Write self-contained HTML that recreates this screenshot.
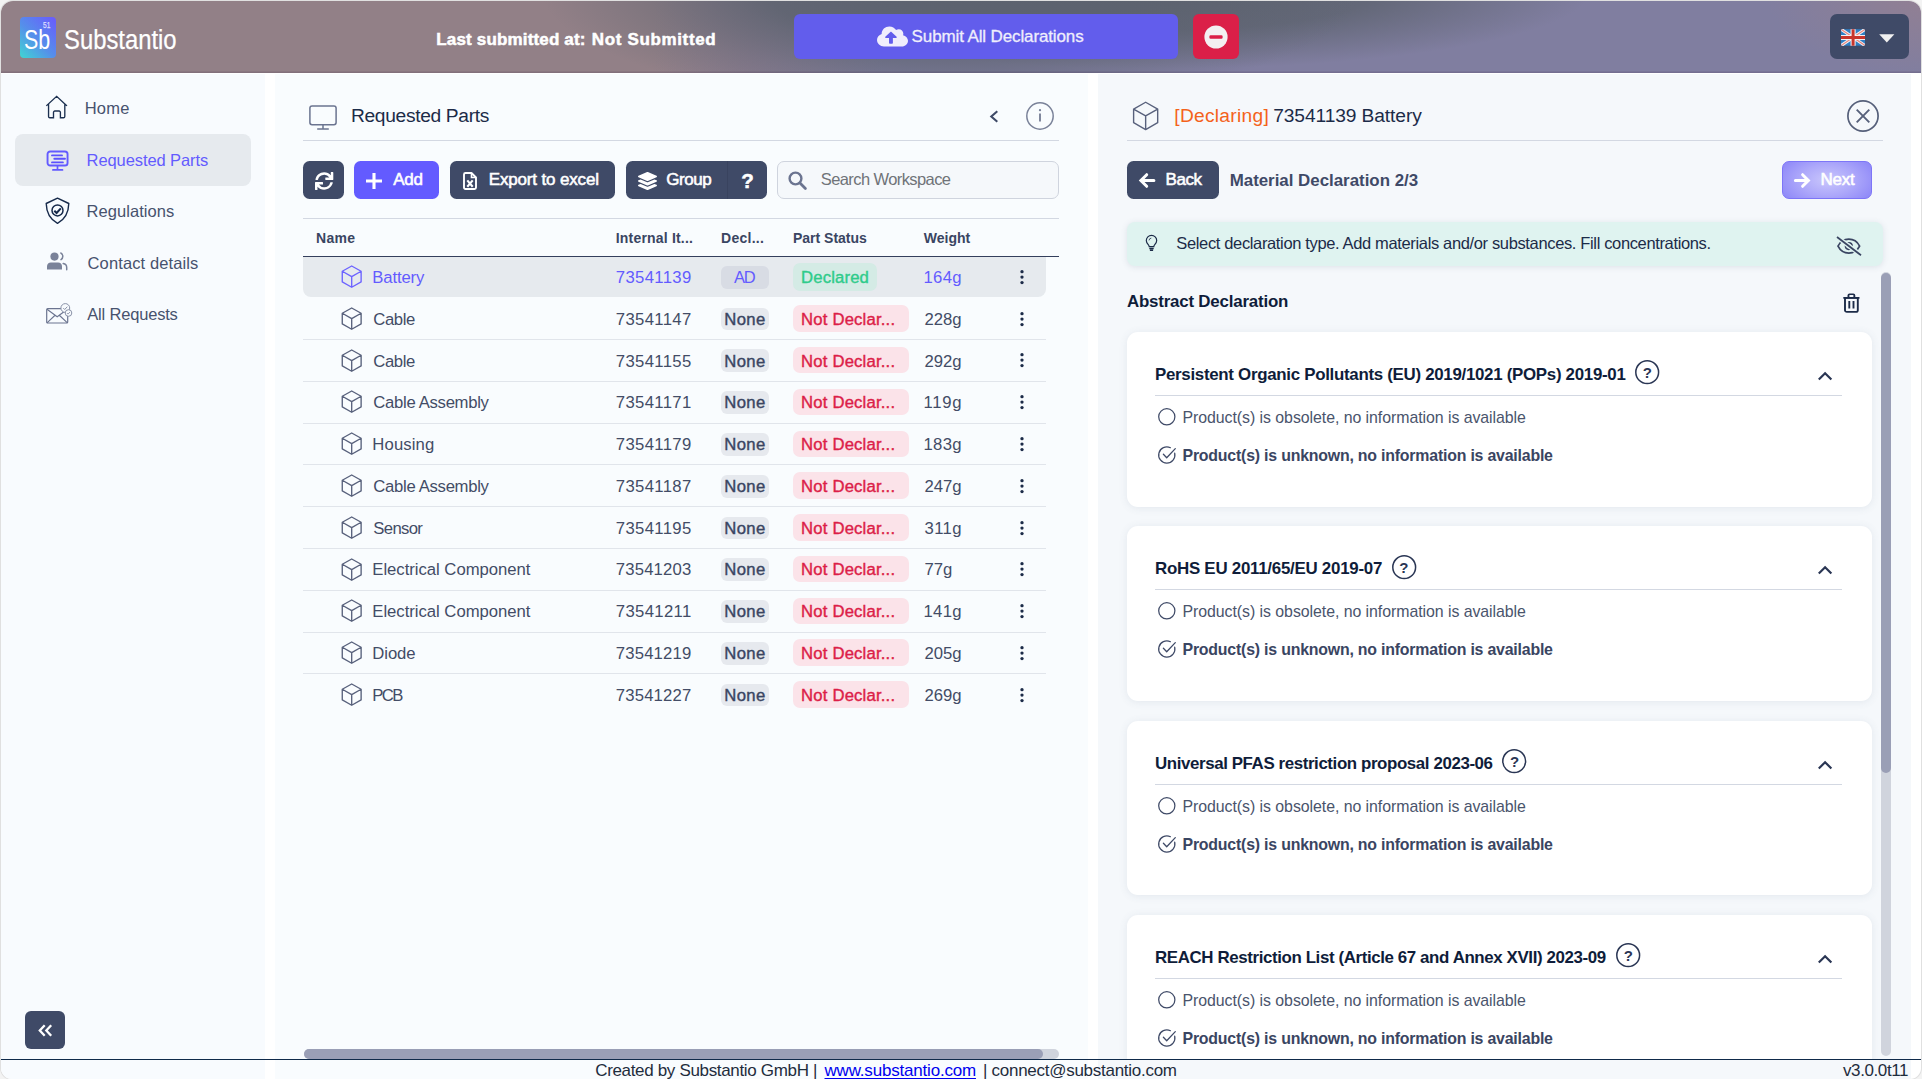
<!DOCTYPE html>
<html lang="en"><head><meta charset="utf-8"><title>Substantio</title>
<style>
html,body{margin:0;padding:0;}
body{width:1922px;height:1079px;overflow:hidden;background:#fff;font-family:"Liberation Sans",sans-serif;position:relative;}
div,svg{box-sizing:border-box;}
svg{overflow:visible;}
</style></head><body>
<div style="position:absolute;left:0;top:0;width:1922px;height:1079px;background:#f3f3f3;"></div>
<div style="position:absolute;left:1px;top:1px;width:1920px;height:1078px;background:#fff;border-radius:12px 12px 11px 11px;box-shadow:0 0 0 1px #e0e0e0;"></div>
<div style="position:absolute;left:1px;top:1px;width:1920px;height:72px;border-radius:12px 12px 0 0;overflow:hidden;background:radial-gradient(ellipse 170px 85px at 1935px -8px, rgba(152,128,142,0.8), rgba(152,128,142,0) 100%),radial-gradient(ellipse 410px 118px at 950px -12px, rgba(92,98,110,0.95) 0%, rgba(92,98,110,0.85) 45%, rgba(92,98,110,0.35) 75%, rgba(92,98,110,0) 100%),radial-gradient(ellipse 430px 78px at 1160px -10px, rgba(92,98,110,0.95) 0%, rgba(92,98,110,0.8) 50%, rgba(92,98,110,0) 100%),linear-gradient(90deg, #928087 0%, #928087 34%, #8a7c8f 39%, #807ea0 46%, #807ea0 100%);box-shadow:inset 0 -1.5px 0 rgba(60,40,70,0.18);"></div>
<div style="position:absolute;left:20px;top:17px;width:36px;height:41px;border-radius:4px;background:linear-gradient(45deg,#3fd6d2 0%,#5590ea 45%,#6a59ff 100%);"></div>
<div style="position:absolute;top:24.50px;font-size:28px;line-height:30px;color:#fff;white-space:nowrap;left:24.33px;"><span style="display:inline-block;transform:scaleX(0.7651);transform-origin:0 0;">Sb</span></div>
<div style="position:absolute;top:20.00px;font-size:8.8px;line-height:10px;color:#dcdcff;white-space:nowrap;left:43.40px;-webkit-text-stroke:0.25px #dcdcff;"><span style="display:inline-block;transform:scaleX(0.7480);transform-origin:0 0;">51</span></div>
<div style="position:absolute;top:23.50px;font-size:27.5px;line-height:32px;color:#fff;white-space:nowrap;left:64.13px;-webkit-text-stroke:0.25px #fff;"><span style="display:inline-block;transform:scaleX(0.8666);transform-origin:0 0;">Substantio</span></div>
<div style="position:absolute;top:27.50px;font-size:17px;line-height:24px;color:#fff;white-space:nowrap;left:436.30px;font-weight:700;letter-spacing:0.162px;-webkit-text-stroke:0.5px #fff;">Last submitted at:</div>
<div style="position:absolute;top:27.50px;font-size:17px;line-height:24px;color:#fff;white-space:nowrap;left:591.80px;font-weight:700;letter-spacing:0.644px;-webkit-text-stroke:0.5px #fff;">Not Submitted</div>
<div style="position:absolute;left:794px;top:14px;width:383.5px;height:44.5px;background:#625dec;border-radius:6px;"></div>
<svg style="position:absolute;left:877px;top:24.5px;" width="31" height="23" viewBox="0 0 640 512" preserveAspectRatio="none"><path fill="#f0eefc" d="M537.6 226.6c4.100-10.700 6.400-22.400 6.400-34.600 0-53-43-96-96-96-19.700 0-38.100 6-53.300 16.200C367 64.200 315.300 32 256 32c-88.400 0-160 71.600-160 160 0 2.700.1 5.400.2 8.100C40.200 219.800 0 273.200 0 336c0 79.500 64.500 144 144 144h368c70.700 0 128-57.300 128-128 0-61.900-44-113.600-102.400-125.400zM393.400 288H328v112c0 8.800-7.200 16-16 16h-48c-8.800 0-16-7.200-16-16V288h-65.400c-14.300 0-21.400-17.200-11.300-27.300l105.400-105.400c6.200-6.200 16.400-6.200 22.600 0l105.400 105.400c10.100 10.100 2.900 27.300-11.300 27.300z"/></svg>
<div style="position:absolute;top:24.50px;font-size:17px;line-height:24px;color:#efeefc;white-space:nowrap;left:911.60px;letter-spacing:-0.124px;-webkit-text-stroke:0.3px #efeefc;">Submit All Declarations</div>
<div style="position:absolute;left:1192.5px;top:14px;width:46px;height:44.5px;background:#db1f48;border-radius:6px;"></div>
<svg style="position:absolute;left:1203.5px;top:24.5px;" width="24" height="24" viewBox="0 0 24 24" preserveAspectRatio="none"><circle cx="12" cy="12" r="11.6" fill="#f3f0f2"/><rect x="5.4" y="10.2" width="13.2" height="3.6" rx="1.2" fill="#db1f48"/></svg>
<div style="position:absolute;left:1830px;top:14px;width:79.1px;height:44.8px;background:#3f4a67;border-radius:7px;"></div>
<div style="position:absolute;left:1841px;top:28.7px;width:24.2px;height:16.9px;border-radius:2px;overflow:hidden;"><svg style="position:absolute;left:0px;top:0px;display:block;" width="24.2" height="16.9" viewBox="0 0 50 34" x="none"><rect width="50" height="34" fill="#2f7fc4"/><path d="M0 0L50 34M50 0L0 34" stroke="#f4f0f2" stroke-width="6.500"/><path d="M0 0L50 34M50 0L0 34" stroke="#e8867e" stroke-width="2.400"/><path d="M25 0V34M0 17H50" stroke="#f4f0f2" stroke-width="10.500"/><path d="M25 0V34M0 17H50" stroke="#c8352c" stroke-width="6.200"/></svg>
</div>
<svg style="position:absolute;left:1878.7px;top:33.8px;" width="15.6" height="8.8" viewBox="0 0 15 9" preserveAspectRatio="none"><path d="M0.200 0.300h14.600L7.500 8.800z" fill="#f0f0f0"/></svg>
<div style="position:absolute;left:1px;top:74px;width:264px;height:1005px;background:#f8fbfe;border-radius:0 0 0 11px;"></div>
<div style="position:absolute;left:15px;top:134px;width:236px;height:52px;background:#e6eaee;border-radius:8px;"></div>
<svg style="position:absolute;left:46px;top:94.5px;" width="22" height="24" viewBox="0 0 22 24" preserveAspectRatio="none"><path d="M.800 10.400L10.650 1.300l9.850 9.100M2.550 9.400V21.400a1.300 1.300 0 0 0 1.300 1.300H7.500V17.300a1.300 1.300 0 0 1 1.300-1.300h4.300a1.300 1.300 0 0 1 1.300 1.300V22.700h3.100a1.300 1.300 0 0 0 1.300-1.300V9.400" fill="none" stroke="#1c3050" stroke-width="1.350" stroke-linejoin="miter" stroke-linecap="square"/></svg>
<div style="position:absolute;top:96.00px;font-size:16.5px;line-height:24px;color:#47526e;white-space:nowrap;left:84.70px;letter-spacing:0.254px;">Home</div>
<svg style="position:absolute;left:46px;top:149.5px;" width="23" height="22" viewBox="0 0 23 22" preserveAspectRatio="none"><rect x="1.550" y="1.450" width="20" height="14.100" rx="2.600" fill="none" stroke="#635bff" stroke-width="1.900"/><path d="M6 5.400h10M8.300 8.800H19M6 12.400h10.900" stroke="#5b52ff" stroke-width="1.900" stroke-linecap="round" fill="none"/><path d="M11.500 16v3.600M6.900 19.900h9.600" stroke="#635bff" stroke-width="1.700" stroke-linecap="round" fill="none"/></svg>
<div style="position:absolute;top:148.00px;font-size:16.5px;line-height:24px;color:#635bff;white-space:nowrap;left:86.60px;letter-spacing:-0.090px;">Requested Parts</div>
<svg style="position:absolute;left:45px;top:197px;" width="25" height="28" viewBox="0 0 25 28" preserveAspectRatio="none"><path d="M12.500 1.200L23.800 6.500c-.200 8.500-3 15.400-11.300 19.900C4.200 21.900 1.400 15 1.200 6.500z" fill="none" stroke="#16294a" stroke-width="1.400" stroke-linejoin="round"/><circle cx="12.500" cy="13.400" r="5.500" fill="none" stroke="#16294a" stroke-width="1.500"/><path d="M9.300 13.700l2.300 2.300 4.200-4.600" fill="none" stroke="#16294a" stroke-width="2" stroke-linecap="butt" stroke-linejoin="miter"/></svg>
<div style="position:absolute;top:199.00px;font-size:16.5px;line-height:24px;color:#47526e;white-space:nowrap;left:86.60px;letter-spacing:0.051px;">Regulations</div>
<svg style="position:absolute;left:46px;top:252px;" width="22" height="19" viewBox="0 0 22 19" preserveAspectRatio="none"><circle cx="8.500" cy="4.600" r="4.100" fill="#7a8299"/><path d="M1 17.500v-3.200c0-2.200 1.700-3.900 3.900-3.900h7.200c2.200 0 3.900 1.700 3.900 3.900v3.200z" fill="#7a8299"/><path d="M14.800 1c2.300 1 2.900 4.800.2 6.600M17.200 11.400c2.200.400 3.500 2 3.500 4v2.300" fill="none" stroke="#7a8299" stroke-width="1.500" stroke-linecap="round"/></svg>
<div style="position:absolute;top:251.00px;font-size:16.5px;line-height:24px;color:#47526e;white-space:nowrap;left:87.60px;letter-spacing:0.115px;">Contact details</div>
<svg style="position:absolute;left:45.5px;top:302.5px;" width="27" height="21" viewBox="0 0 27 21" preserveAspectRatio="none"><rect x=".700" y="5.700" width="21" height="14.300" rx="1" fill="none" stroke="#6b7490" stroke-width="1.200"/><path d="M1 6.200l10.200 7.600L21.400 6.200M1 19.800l7.800-7.300M21.400 19.800l-7.800-7.300" fill="none" stroke="#6b7490" stroke-width="1.100"/><circle cx="19.300" cy="5" r="4.400" fill="#f8fbfe" stroke="#8a92a8" stroke-width="1"/><path d="M17.300 5.100l1.400 1.400 2.600-2.800" fill="none" stroke="#8a92a8" stroke-width="1"/><circle cx="22.500" cy="10" r="3.300" fill="#f8fbfe" stroke="#8a92a8" stroke-width="1"/><path d="M21 10.100l1 1 2-2.100" fill="none" stroke="#8a92a8" stroke-width=".9"/></svg>
<div style="position:absolute;top:302.00px;font-size:16.5px;line-height:24px;color:#47526e;white-space:nowrap;left:87.30px;letter-spacing:-0.189px;">All Requests</div>
<div style="position:absolute;left:25px;top:1011px;width:40px;height:38px;background:#3f4a67;border-radius:6px;"></div>
<svg style="position:absolute;left:37.5px;top:1023.5px;" width="15" height="13" viewBox="0 0 15 13" preserveAspectRatio="none"><path d="M6.700 1.300L1.800 6.500l4.900 5.200M13.200 1.300L8.300 6.500l4.900 5.200" fill="none" stroke="#fff" stroke-width="2.300" stroke-linejoin="miter"/></svg>
<div style="position:absolute;left:275px;top:74px;width:813px;height:1005px;background:#f9fcfe;"></div>
<svg style="position:absolute;left:308.5px;top:104.5px;" width="28" height="25" viewBox="0 0 28 25" preserveAspectRatio="none"><rect x=".900" y=".900" width="26.200" height="18.800" rx="2.200" fill="none" stroke="#6b7490" stroke-width="1.500"/><path d="M14 19.700v4M8.200 24h11.600" stroke="#6b7490" stroke-width="1.500" fill="none"/></svg>
<div style="position:absolute;top:101.50px;font-size:19.2px;line-height:28px;color:#1c2b48;white-space:nowrap;left:351.00px;letter-spacing:-0.331px;">Requested Parts</div>
<svg style="position:absolute;left:989px;top:109.7px;" width="10" height="13" viewBox="0 0 10 13" preserveAspectRatio="none"><path d="M8.300 1.200L2.300 6.500l6 5.300" fill="none" stroke="#3f4a67" stroke-width="2.100"/></svg>
<svg style="position:absolute;left:1026.2px;top:102px;" width="28" height="28" viewBox="0 0 28 28" preserveAspectRatio="none"><circle cx="14" cy="14" r="13.200" fill="none" stroke="#7a8299" stroke-width="1.500"/><path d="M14 11.500v8" stroke="#7a8299" stroke-width="1.900"/><circle cx="14" cy="8.200" r="1.150" fill="#7a8299"/></svg>
<div style="position:absolute;left:303px;top:140px;width:756px;height:1px;background:#d3d8e2;"></div>
<div style="position:absolute;left:303px;top:161px;width:41px;height:38px;background:#3f4a67;border-radius:6.5px;"></div>
<svg style="position:absolute;left:314.8px;top:171.6px;" width="18.3" height="18" viewBox="0 0 512 512" preserveAspectRatio="none"><path fill="#fff" d="M440.650 12.570l4 82.770A247.160 247.160 0 0 0 255.830 8C134.730 8 33.910 94.920 12.290 209.820A12 12 0 0 0 24.090 224h49.050a12 12 0 0 0 11.670-9.260 175.910 175.910 0 0 1 317-56.940l-101.460-4.860a12 12 0 0 0-12.570 12v47.410a12 12 0 0 0 12 12H500a12 12 0 0 0 12-12V12a12 12 0 0 0-12-12h-47.370a12 12 0 0 0-11.980 12.570zM255.830 432a175.610 175.610 0 0 1-146-77.800l101.800 4.870a12 12 0 0 0 12.570-12v-47.400a12 12 0 0 0-12-12H12a12 12 0 0 0-12 12V500a12 12 0 0 0 12 12h47.350a12 12 0 0 0 12-12.600l-4.150-82.570A247.170 247.170 0 0 0 255.830 504c121.110 0 221.930-86.920 243.550-201.820a12 12 0 0 0-11.800-14.180h-49.050a12 12 0 0 0-11.670 9.260A175.860 175.860 0 0 1 255.830 432z"/></svg>
<div style="position:absolute;left:354px;top:161px;width:85.2px;height:38px;background:#635bff;border-radius:6.5px;"></div>
<svg style="position:absolute;left:365.8px;top:172.8px;" width="16" height="16" viewBox="0 0 16 16" preserveAspectRatio="none"><path d="M8 0v16M0 8h16" stroke="#fff" stroke-width="3.100"/></svg>
<div style="position:absolute;top:167.50px;font-size:17px;line-height:24px;color:#fff;white-space:nowrap;left:393.20px;letter-spacing:-0.247px;-webkit-text-stroke:0.55px #fff;">Add</div>
<div style="position:absolute;left:450px;top:161px;width:165px;height:38px;background:#3f4a67;border-radius:6.5px;"></div>
<svg style="position:absolute;left:463px;top:171.8px;" width="14" height="18" viewBox="0 0 14 18" preserveAspectRatio="none"><path d="M1 2.500A1.500 1.500 0 0 1 2.500 1h6L13 5.500v10A1.500 1.500 0 0 1 11.500 17h-9A1.500 1.500 0 0 1 1 15.500z" fill="none" stroke="#fff" stroke-width="1.900" stroke-linejoin="round"/><path d="M8.500 1v4.500H13" fill="none" stroke="#fff" stroke-width="1.600"/><path d="M4.300 8.400l5.400 6.400M9.700 8.400l-5.400 6.400" stroke="#fff" stroke-width="2.100"/></svg>
<div style="position:absolute;top:167.50px;font-size:17px;line-height:24px;color:#fff;white-space:nowrap;left:488.70px;letter-spacing:-0.148px;-webkit-text-stroke:0.55px #fff;">Export to excel</div>
<div style="position:absolute;left:626px;top:161px;width:140.8px;height:38px;background:#3f4a67;border-radius:6.5px;"></div>
<div style="position:absolute;left:727px;top:161px;width:1px;height:38px;background:#39435f;"></div>
<svg style="position:absolute;left:637.5px;top:171.7px;" width="19" height="18" viewBox="0 0 512 512" preserveAspectRatio="none"><path fill="#fff" d="M12.400 148l232.900 105.700c6.800 3.100 14.500 3.100 21.300 0L499.600 148c16.600-7.500 16.600-32.500 0-40L266.700 2.300a25.600 25.600 0 0 0-21.300 0L12.400 108c-16.600 7.500-16.600 32.500 0 40zm487.200 88.300l-58.100-26.300-161.600 73.300c-7.600 3.400-15.600 5.200-23.900 5.200s-16.300-1.800-23.900-5.200L70.500 210l-58.100 26.300c-16.600 7.500-16.600 32.500 0 40l232.900 105.600c6.800 3.100 14.500 3.100 21.300 0L499.600 276.300c16.600-7.500 16.600-32.500 0-40zm0 127.800l-57.900-26.200-161.800 73.300c-7.600 3.400-15.600 5.200-23.900 5.200s-16.300-1.800-23.900-5.200L70.300 337.900 12.400 364.100c-16.600 7.500-16.600 32.500 0 40l232.900 105.600c6.800 3.100 14.500 3.100 21.300 0L499.600 404.100c16.600-7.500 16.600-32.500 0-40z"/></svg>
<div style="position:absolute;top:167.50px;font-size:17px;line-height:24px;color:#fff;white-space:nowrap;left:666.20px;letter-spacing:-0.423px;-webkit-text-stroke:0.55px #fff;">Group</div>
<div style="position:absolute;top:167.50px;font-size:20.5px;line-height:26px;color:#fff;white-space:nowrap;left:741.30px;font-weight:700;letter-spacing:0.000px;-webkit-text-stroke:0.5px #fff;">?</div>
<div style="position:absolute;left:777.2px;top:161.2px;width:281.7px;height:37.6px;background:#f5f8fb;border-radius:7px;border:1px solid #cfd4de;"></div>
<svg style="position:absolute;left:788px;top:170.5px;" width="19" height="19" viewBox="0 0 19 19" preserveAspectRatio="none"><circle cx="7.500" cy="7.500" r="5.900" fill="none" stroke="#6b7490" stroke-width="2.400"/><path d="M12 12l5.400 5.400" stroke="#6b7490" stroke-width="2.800" stroke-linecap="round"/></svg>
<div style="position:absolute;top:167.00px;font-size:16.5px;line-height:24px;color:#6f7378;white-space:nowrap;left:820.80px;letter-spacing:-0.594px;">Search Workspace</div>
<div style="position:absolute;left:303px;top:218px;width:756px;height:1px;background:#d3d8e2;"></div>
<div style="position:absolute;top:228.00px;font-size:14px;line-height:20px;color:#3a4562;white-space:nowrap;left:316.00px;font-weight:700;letter-spacing:0.318px;">Name</div>
<div style="position:absolute;top:228.00px;font-size:14px;line-height:20px;color:#3a4562;white-space:nowrap;left:615.75px;font-weight:700;letter-spacing:0.190px;">Internal It...</div>
<div style="position:absolute;top:228.00px;font-size:14px;line-height:20px;color:#3a4562;white-space:nowrap;left:721.00px;font-weight:700;letter-spacing:0.275px;">Decl...</div>
<div style="position:absolute;top:228.00px;font-size:14px;line-height:20px;color:#3a4562;white-space:nowrap;left:793.00px;font-weight:700;letter-spacing:-0.012px;">Part Status</div>
<div style="position:absolute;top:228.00px;font-size:14px;line-height:20px;color:#3a4562;white-space:nowrap;left:923.75px;font-weight:700;letter-spacing:0.002px;">Weight</div>
<div style="position:absolute;left:303px;top:256px;width:756px;height:1.3px;background:#343f5c;"></div>
<div style="position:absolute;left:303px;top:257.3px;width:742.6px;height:39.5px;background:#e6eaee;border-radius:0 0 8px 8px;"></div>
<div style="position:absolute;left:303px;top:339px;width:742.6px;height:1px;background:#e1e5eb;"></div>
<div style="position:absolute;left:303px;top:381px;width:742.6px;height:1px;background:#e1e5eb;"></div>
<div style="position:absolute;left:303px;top:423px;width:742.6px;height:1px;background:#e1e5eb;"></div>
<div style="position:absolute;left:303px;top:464px;width:742.6px;height:1px;background:#e1e5eb;"></div>
<div style="position:absolute;left:303px;top:506px;width:742.6px;height:1px;background:#e1e5eb;"></div>
<div style="position:absolute;left:303px;top:548px;width:742.6px;height:1px;background:#e1e5eb;"></div>
<div style="position:absolute;left:303px;top:590px;width:742.6px;height:1px;background:#e1e5eb;"></div>
<div style="position:absolute;left:303px;top:632px;width:742.6px;height:1px;background:#e1e5eb;"></div>
<div style="position:absolute;left:303px;top:673px;width:742.6px;height:1px;background:#e1e5eb;"></div>
<svg style="position:absolute;left:340.7px;top:265.0px;" width="21.4" height="23.2" viewBox="0 0 22 24" preserveAspectRatio="none"><path d="M11 1l9.700 5.500v11L11 23 1.300 17.500v-11z M1.300 6.500L11 12l9.700-5.500 M11 12v11" fill="none" stroke="#6c63ff" stroke-width="1.3878504672897198" stroke-linejoin="round"/></svg>
<div style="position:absolute;top:265.50px;font-size:16.7px;line-height:24px;color:#635bff;white-space:nowrap;left:372.30px;letter-spacing:-0.137px;">Battery</div>
<div style="position:absolute;top:265.50px;font-size:16.7px;line-height:24px;color:#635bff;white-space:nowrap;left:615.75px;letter-spacing:0.361px;">73541139</div>
<div style="position:absolute;left:721px;top:266px;width:47.7px;height:22.9px;background:#d8dce4;border-radius:6px;"></div>
<div style="position:absolute;top:265.00px;font-size:16.5px;line-height:24px;color:#635bff;white-space:nowrap;left:734.10px;letter-spacing:-1.305px;">AD</div>
<div style="position:absolute;left:793.1px;top:263px;width:83.9px;height:27.8px;background:#d4ebe5;border-radius:7px;"></div>
<div style="position:absolute;top:265.50px;font-size:16.7px;line-height:24px;color:#2fcb8b;white-space:nowrap;left:801.10px;letter-spacing:0.143px;-webkit-text-stroke:0.4px #2fcb8b;">Declared</div>
<div style="position:absolute;top:265.50px;font-size:16.7px;line-height:24px;color:#635bff;white-space:nowrap;left:923.50px;letter-spacing:0.319px;">164g</div>
<svg style="position:absolute;left:1019.8px;top:269.8px;" width="4" height="14.6" viewBox="0 0 4 14.600" preserveAspectRatio="none"><circle cx="2" cy="1.700" r="1.650" fill="#1c2b48"/><circle cx="2" cy="7.100" r="1.650" fill="#1c2b48"/><circle cx="2" cy="12.600" r="1.650" fill="#1c2b48"/></svg>
<svg style="position:absolute;left:340.7px;top:306.79px;" width="21.4" height="23.2" viewBox="0 0 22 24" preserveAspectRatio="none"><path d="M11 1l9.700 5.500v11L11 23 1.300 17.500v-11z M1.300 6.500L11 12l9.700-5.500 M11 12v11" fill="none" stroke="#58617c" stroke-width="1.3878504672897198" stroke-linejoin="round"/></svg>
<div style="position:absolute;top:307.50px;font-size:16.7px;line-height:24px;color:#434c66;white-space:nowrap;left:373.30px;letter-spacing:-0.405px;">Cable</div>
<div style="position:absolute;top:307.50px;font-size:16.7px;line-height:24px;color:#434c66;white-space:nowrap;left:615.75px;letter-spacing:0.361px;">73541147</div>
<div style="position:absolute;left:721px;top:307.6px;width:47.7px;height:22.8px;background:#e6e9ee;border-radius:6px;"></div>
<div style="position:absolute;top:307.50px;font-size:16.7px;line-height:24px;color:#3a4562;white-space:nowrap;left:724.30px;letter-spacing:0.362px;-webkit-text-stroke:0.4px #3a4562;">None</div>
<div style="position:absolute;left:793.1px;top:305.1px;width:115.7px;height:26.5px;background:#fbe3e9;border-radius:7px;"></div>
<div style="position:absolute;top:307.50px;font-size:16.7px;line-height:24px;color:#dc1e48;white-space:nowrap;left:801.10px;letter-spacing:0.177px;-webkit-text-stroke:0.4px #dc1e48;">Not Declar...</div>
<div style="position:absolute;top:307.50px;font-size:16.7px;line-height:24px;color:#434c66;white-space:nowrap;left:924.50px;letter-spacing:-0.014px;">228g</div>
<svg style="position:absolute;left:1019.8px;top:311.6px;" width="4" height="14.6" viewBox="0 0 4 14.600" preserveAspectRatio="none"><circle cx="2" cy="1.700" r="1.650" fill="#1c2b48"/><circle cx="2" cy="7.100" r="1.650" fill="#1c2b48"/><circle cx="2" cy="12.600" r="1.650" fill="#1c2b48"/></svg>
<svg style="position:absolute;left:340.7px;top:348.58px;" width="21.4" height="23.2" viewBox="0 0 22 24" preserveAspectRatio="none"><path d="M11 1l9.700 5.500v11L11 23 1.300 17.500v-11z M1.300 6.500L11 12l9.700-5.500 M11 12v11" fill="none" stroke="#58617c" stroke-width="1.3878504672897198" stroke-linejoin="round"/></svg>
<div style="position:absolute;top:349.50px;font-size:16.7px;line-height:24px;color:#434c66;white-space:nowrap;left:373.30px;letter-spacing:-0.405px;">Cable</div>
<div style="position:absolute;top:349.50px;font-size:16.7px;line-height:24px;color:#434c66;white-space:nowrap;left:615.75px;letter-spacing:0.361px;">73541155</div>
<div style="position:absolute;left:721px;top:349.4px;width:47.7px;height:22.8px;background:#e6e9ee;border-radius:6px;"></div>
<div style="position:absolute;top:349.50px;font-size:16.7px;line-height:24px;color:#3a4562;white-space:nowrap;left:724.30px;letter-spacing:0.362px;-webkit-text-stroke:0.4px #3a4562;">None</div>
<div style="position:absolute;left:793.1px;top:346.9px;width:115.7px;height:26.5px;background:#fbe3e9;border-radius:7px;"></div>
<div style="position:absolute;top:349.50px;font-size:16.7px;line-height:24px;color:#dc1e48;white-space:nowrap;left:801.10px;letter-spacing:0.177px;-webkit-text-stroke:0.4px #dc1e48;">Not Declar...</div>
<div style="position:absolute;top:349.50px;font-size:16.7px;line-height:24px;color:#434c66;white-space:nowrap;left:924.50px;letter-spacing:-0.014px;">292g</div>
<svg style="position:absolute;left:1019.8px;top:353.4px;" width="4" height="14.6" viewBox="0 0 4 14.600" preserveAspectRatio="none"><circle cx="2" cy="1.700" r="1.650" fill="#1c2b48"/><circle cx="2" cy="7.100" r="1.650" fill="#1c2b48"/><circle cx="2" cy="12.600" r="1.650" fill="#1c2b48"/></svg>
<svg style="position:absolute;left:340.7px;top:390.37px;" width="21.4" height="23.2" viewBox="0 0 22 24" preserveAspectRatio="none"><path d="M11 1l9.700 5.500v11L11 23 1.300 17.500v-11z M1.300 6.500L11 12l9.700-5.500 M11 12v11" fill="none" stroke="#58617c" stroke-width="1.3878504672897198" stroke-linejoin="round"/></svg>
<div style="position:absolute;top:390.50px;font-size:16.7px;line-height:24px;color:#434c66;white-space:nowrap;left:373.30px;letter-spacing:-0.310px;">Cable Assembly</div>
<div style="position:absolute;top:390.50px;font-size:16.7px;line-height:24px;color:#434c66;white-space:nowrap;left:615.75px;letter-spacing:0.361px;">73541171</div>
<div style="position:absolute;left:721px;top:391.2px;width:47.7px;height:22.8px;background:#e6e9ee;border-radius:6px;"></div>
<div style="position:absolute;top:390.50px;font-size:16.7px;line-height:24px;color:#3a4562;white-space:nowrap;left:724.30px;letter-spacing:0.362px;-webkit-text-stroke:0.4px #3a4562;">None</div>
<div style="position:absolute;left:793.1px;top:388.7px;width:115.7px;height:26.5px;background:#fbe3e9;border-radius:7px;"></div>
<div style="position:absolute;top:390.50px;font-size:16.7px;line-height:24px;color:#dc1e48;white-space:nowrap;left:801.10px;letter-spacing:0.177px;-webkit-text-stroke:0.4px #dc1e48;">Not Declar...</div>
<div style="position:absolute;top:390.50px;font-size:16.7px;line-height:24px;color:#434c66;white-space:nowrap;left:923.50px;letter-spacing:0.732px;">119g</div>
<svg style="position:absolute;left:1019.8px;top:395.2px;" width="4" height="14.6" viewBox="0 0 4 14.600" preserveAspectRatio="none"><circle cx="2" cy="1.700" r="1.650" fill="#1c2b48"/><circle cx="2" cy="7.100" r="1.650" fill="#1c2b48"/><circle cx="2" cy="12.600" r="1.650" fill="#1c2b48"/></svg>
<svg style="position:absolute;left:340.7px;top:432.15999999999997px;" width="21.4" height="23.2" viewBox="0 0 22 24" preserveAspectRatio="none"><path d="M11 1l9.700 5.500v11L11 23 1.300 17.500v-11z M1.300 6.500L11 12l9.700-5.500 M11 12v11" fill="none" stroke="#58617c" stroke-width="1.3878504672897198" stroke-linejoin="round"/></svg>
<div style="position:absolute;top:432.50px;font-size:16.7px;line-height:24px;color:#434c66;white-space:nowrap;left:372.30px;letter-spacing:0.126px;">Housing</div>
<div style="position:absolute;top:432.50px;font-size:16.7px;line-height:24px;color:#434c66;white-space:nowrap;left:615.75px;letter-spacing:0.361px;">73541179</div>
<div style="position:absolute;left:721px;top:433.0px;width:47.7px;height:22.8px;background:#e6e9ee;border-radius:6px;"></div>
<div style="position:absolute;top:432.50px;font-size:16.7px;line-height:24px;color:#3a4562;white-space:nowrap;left:724.30px;letter-spacing:0.362px;-webkit-text-stroke:0.4px #3a4562;">None</div>
<div style="position:absolute;left:793.1px;top:430.5px;width:115.7px;height:26.5px;background:#fbe3e9;border-radius:7px;"></div>
<div style="position:absolute;top:432.50px;font-size:16.7px;line-height:24px;color:#dc1e48;white-space:nowrap;left:801.10px;letter-spacing:0.177px;-webkit-text-stroke:0.4px #dc1e48;">Not Declar...</div>
<div style="position:absolute;top:432.50px;font-size:16.7px;line-height:24px;color:#434c66;white-space:nowrap;left:923.50px;letter-spacing:0.319px;">183g</div>
<svg style="position:absolute;left:1019.8px;top:437.0px;" width="4" height="14.6" viewBox="0 0 4 14.600" preserveAspectRatio="none"><circle cx="2" cy="1.700" r="1.650" fill="#1c2b48"/><circle cx="2" cy="7.100" r="1.650" fill="#1c2b48"/><circle cx="2" cy="12.600" r="1.650" fill="#1c2b48"/></svg>
<svg style="position:absolute;left:340.7px;top:473.95px;" width="21.4" height="23.2" viewBox="0 0 22 24" preserveAspectRatio="none"><path d="M11 1l9.700 5.500v11L11 23 1.300 17.500v-11z M1.300 6.500L11 12l9.700-5.500 M11 12v11" fill="none" stroke="#58617c" stroke-width="1.3878504672897198" stroke-linejoin="round"/></svg>
<div style="position:absolute;top:474.50px;font-size:16.7px;line-height:24px;color:#434c66;white-space:nowrap;left:373.30px;letter-spacing:-0.310px;">Cable Assembly</div>
<div style="position:absolute;top:474.50px;font-size:16.7px;line-height:24px;color:#434c66;white-space:nowrap;left:615.75px;letter-spacing:0.361px;">73541187</div>
<div style="position:absolute;left:721px;top:474.8px;width:47.7px;height:22.8px;background:#e6e9ee;border-radius:6px;"></div>
<div style="position:absolute;top:474.50px;font-size:16.7px;line-height:24px;color:#3a4562;white-space:nowrap;left:724.30px;letter-spacing:0.362px;-webkit-text-stroke:0.4px #3a4562;">None</div>
<div style="position:absolute;left:793.1px;top:472.2px;width:115.7px;height:26.5px;background:#fbe3e9;border-radius:7px;"></div>
<div style="position:absolute;top:474.50px;font-size:16.7px;line-height:24px;color:#dc1e48;white-space:nowrap;left:801.10px;letter-spacing:0.177px;-webkit-text-stroke:0.4px #dc1e48;">Not Declar...</div>
<div style="position:absolute;top:474.50px;font-size:16.7px;line-height:24px;color:#434c66;white-space:nowrap;left:924.50px;letter-spacing:-0.014px;">247g</div>
<svg style="position:absolute;left:1019.8px;top:478.8px;" width="4" height="14.6" viewBox="0 0 4 14.600" preserveAspectRatio="none"><circle cx="2" cy="1.700" r="1.650" fill="#1c2b48"/><circle cx="2" cy="7.100" r="1.650" fill="#1c2b48"/><circle cx="2" cy="12.600" r="1.650" fill="#1c2b48"/></svg>
<svg style="position:absolute;left:340.7px;top:515.74px;" width="21.4" height="23.2" viewBox="0 0 22 24" preserveAspectRatio="none"><path d="M11 1l9.700 5.500v11L11 23 1.300 17.500v-11z M1.300 6.500L11 12l9.700-5.500 M11 12v11" fill="none" stroke="#58617c" stroke-width="1.3878504672897198" stroke-linejoin="round"/></svg>
<div style="position:absolute;top:516.50px;font-size:16.7px;line-height:24px;color:#434c66;white-space:nowrap;left:373.30px;letter-spacing:-0.663px;">Sensor</div>
<div style="position:absolute;top:516.50px;font-size:16.7px;line-height:24px;color:#434c66;white-space:nowrap;left:615.75px;letter-spacing:0.361px;">73541195</div>
<div style="position:absolute;left:721px;top:516.5px;width:47.7px;height:22.8px;background:#e6e9ee;border-radius:6px;"></div>
<div style="position:absolute;top:516.50px;font-size:16.7px;line-height:24px;color:#3a4562;white-space:nowrap;left:724.30px;letter-spacing:0.362px;-webkit-text-stroke:0.4px #3a4562;">None</div>
<div style="position:absolute;left:793.1px;top:514.0px;width:115.7px;height:26.5px;background:#fbe3e9;border-radius:7px;"></div>
<div style="position:absolute;top:516.50px;font-size:16.7px;line-height:24px;color:#dc1e48;white-space:nowrap;left:801.10px;letter-spacing:0.177px;-webkit-text-stroke:0.4px #dc1e48;">Not Declar...</div>
<div style="position:absolute;top:516.50px;font-size:16.7px;line-height:24px;color:#434c66;white-space:nowrap;left:924.50px;letter-spacing:0.399px;">311g</div>
<svg style="position:absolute;left:1019.8px;top:520.5px;" width="4" height="14.6" viewBox="0 0 4 14.600" preserveAspectRatio="none"><circle cx="2" cy="1.700" r="1.650" fill="#1c2b48"/><circle cx="2" cy="7.100" r="1.650" fill="#1c2b48"/><circle cx="2" cy="12.600" r="1.650" fill="#1c2b48"/></svg>
<svg style="position:absolute;left:340.7px;top:557.53px;" width="21.4" height="23.2" viewBox="0 0 22 24" preserveAspectRatio="none"><path d="M11 1l9.700 5.500v11L11 23 1.300 17.500v-11z M1.300 6.500L11 12l9.700-5.500 M11 12v11" fill="none" stroke="#58617c" stroke-width="1.3878504672897198" stroke-linejoin="round"/></svg>
<div style="position:absolute;top:557.50px;font-size:16.7px;line-height:24px;color:#434c66;white-space:nowrap;left:372.30px;letter-spacing:-0.025px;">Electrical Component</div>
<div style="position:absolute;top:557.50px;font-size:16.7px;line-height:24px;color:#434c66;white-space:nowrap;left:615.75px;letter-spacing:0.183px;">73541203</div>
<div style="position:absolute;left:721px;top:558.3px;width:47.7px;height:22.8px;background:#e6e9ee;border-radius:6px;"></div>
<div style="position:absolute;top:557.50px;font-size:16.7px;line-height:24px;color:#3a4562;white-space:nowrap;left:724.30px;letter-spacing:0.362px;-webkit-text-stroke:0.4px #3a4562;">None</div>
<div style="position:absolute;left:793.1px;top:555.8px;width:115.7px;height:26.5px;background:#fbe3e9;border-radius:7px;"></div>
<div style="position:absolute;top:557.50px;font-size:16.7px;line-height:24px;color:#dc1e48;white-space:nowrap;left:801.10px;letter-spacing:0.177px;-webkit-text-stroke:0.4px #dc1e48;">Not Declar...</div>
<div style="position:absolute;top:557.50px;font-size:16.7px;line-height:24px;color:#434c66;white-space:nowrap;left:924.50px;letter-spacing:-0.031px;">77g</div>
<svg style="position:absolute;left:1019.8px;top:562.3px;" width="4" height="14.6" viewBox="0 0 4 14.600" preserveAspectRatio="none"><circle cx="2" cy="1.700" r="1.650" fill="#1c2b48"/><circle cx="2" cy="7.100" r="1.650" fill="#1c2b48"/><circle cx="2" cy="12.600" r="1.650" fill="#1c2b48"/></svg>
<svg style="position:absolute;left:340.7px;top:599.3199999999999px;" width="21.4" height="23.2" viewBox="0 0 22 24" preserveAspectRatio="none"><path d="M11 1l9.700 5.500v11L11 23 1.300 17.500v-11z M1.300 6.500L11 12l9.700-5.500 M11 12v11" fill="none" stroke="#58617c" stroke-width="1.3878504672897198" stroke-linejoin="round"/></svg>
<div style="position:absolute;top:599.50px;font-size:16.7px;line-height:24px;color:#434c66;white-space:nowrap;left:372.30px;letter-spacing:-0.025px;">Electrical Component</div>
<div style="position:absolute;top:599.50px;font-size:16.7px;line-height:24px;color:#434c66;white-space:nowrap;left:615.75px;letter-spacing:0.361px;">73541211</div>
<div style="position:absolute;left:721px;top:600.1px;width:47.7px;height:22.8px;background:#e6e9ee;border-radius:6px;"></div>
<div style="position:absolute;top:599.50px;font-size:16.7px;line-height:24px;color:#3a4562;white-space:nowrap;left:724.30px;letter-spacing:0.362px;-webkit-text-stroke:0.4px #3a4562;">None</div>
<div style="position:absolute;left:793.1px;top:597.6px;width:115.7px;height:26.5px;background:#fbe3e9;border-radius:7px;"></div>
<div style="position:absolute;top:599.50px;font-size:16.7px;line-height:24px;color:#dc1e48;white-space:nowrap;left:801.10px;letter-spacing:0.177px;-webkit-text-stroke:0.4px #dc1e48;">Not Declar...</div>
<div style="position:absolute;top:599.50px;font-size:16.7px;line-height:24px;color:#434c66;white-space:nowrap;left:923.50px;letter-spacing:0.319px;">141g</div>
<svg style="position:absolute;left:1019.8px;top:604.1px;" width="4" height="14.6" viewBox="0 0 4 14.600" preserveAspectRatio="none"><circle cx="2" cy="1.700" r="1.650" fill="#1c2b48"/><circle cx="2" cy="7.100" r="1.650" fill="#1c2b48"/><circle cx="2" cy="12.600" r="1.650" fill="#1c2b48"/></svg>
<svg style="position:absolute;left:340.7px;top:641.11px;" width="21.4" height="23.2" viewBox="0 0 22 24" preserveAspectRatio="none"><path d="M11 1l9.700 5.500v11L11 23 1.300 17.500v-11z M1.300 6.500L11 12l9.700-5.500 M11 12v11" fill="none" stroke="#58617c" stroke-width="1.3878504672897198" stroke-linejoin="round"/></svg>
<div style="position:absolute;top:641.50px;font-size:16.7px;line-height:24px;color:#434c66;white-space:nowrap;left:372.30px;letter-spacing:-0.080px;">Diode</div>
<div style="position:absolute;top:641.50px;font-size:16.7px;line-height:24px;color:#434c66;white-space:nowrap;left:615.75px;letter-spacing:0.183px;">73541219</div>
<div style="position:absolute;left:721px;top:641.9px;width:47.7px;height:22.8px;background:#e6e9ee;border-radius:6px;"></div>
<div style="position:absolute;top:641.50px;font-size:16.7px;line-height:24px;color:#3a4562;white-space:nowrap;left:724.30px;letter-spacing:0.362px;-webkit-text-stroke:0.4px #3a4562;">None</div>
<div style="position:absolute;left:793.1px;top:639.4px;width:115.7px;height:26.5px;background:#fbe3e9;border-radius:7px;"></div>
<div style="position:absolute;top:641.50px;font-size:16.7px;line-height:24px;color:#dc1e48;white-space:nowrap;left:801.10px;letter-spacing:0.177px;-webkit-text-stroke:0.4px #dc1e48;">Not Declar...</div>
<div style="position:absolute;top:641.50px;font-size:16.7px;line-height:24px;color:#434c66;white-space:nowrap;left:924.50px;letter-spacing:-0.014px;">205g</div>
<svg style="position:absolute;left:1019.8px;top:645.9px;" width="4" height="14.6" viewBox="0 0 4 14.600" preserveAspectRatio="none"><circle cx="2" cy="1.700" r="1.650" fill="#1c2b48"/><circle cx="2" cy="7.100" r="1.650" fill="#1c2b48"/><circle cx="2" cy="12.600" r="1.650" fill="#1c2b48"/></svg>
<svg style="position:absolute;left:340.7px;top:682.9px;" width="21.4" height="23.2" viewBox="0 0 22 24" preserveAspectRatio="none"><path d="M11 1l9.700 5.500v11L11 23 1.300 17.500v-11z M1.300 6.500L11 12l9.700-5.500 M11 12v11" fill="none" stroke="#58617c" stroke-width="1.3878504672897198" stroke-linejoin="round"/></svg>
<div style="position:absolute;top:683.50px;font-size:16.7px;line-height:24px;color:#434c66;white-space:nowrap;left:372.30px;letter-spacing:-1.591px;">PCB</div>
<div style="position:absolute;top:683.50px;font-size:16.7px;line-height:24px;color:#434c66;white-space:nowrap;left:615.75px;letter-spacing:0.183px;">73541227</div>
<div style="position:absolute;left:721px;top:683.7px;width:47.7px;height:22.8px;background:#e6e9ee;border-radius:6px;"></div>
<div style="position:absolute;top:683.50px;font-size:16.7px;line-height:24px;color:#3a4562;white-space:nowrap;left:724.30px;letter-spacing:0.362px;-webkit-text-stroke:0.4px #3a4562;">None</div>
<div style="position:absolute;left:793.1px;top:681.2px;width:115.7px;height:26.5px;background:#fbe3e9;border-radius:7px;"></div>
<div style="position:absolute;top:683.50px;font-size:16.7px;line-height:24px;color:#dc1e48;white-space:nowrap;left:801.10px;letter-spacing:0.177px;-webkit-text-stroke:0.4px #dc1e48;">Not Declar...</div>
<div style="position:absolute;top:683.50px;font-size:16.7px;line-height:24px;color:#434c66;white-space:nowrap;left:924.50px;letter-spacing:-0.014px;">269g</div>
<svg style="position:absolute;left:1019.8px;top:687.7px;" width="4" height="14.6" viewBox="0 0 4 14.600" preserveAspectRatio="none"><circle cx="2" cy="1.700" r="1.650" fill="#1c2b48"/><circle cx="2" cy="7.100" r="1.650" fill="#1c2b48"/><circle cx="2" cy="12.600" r="1.650" fill="#1c2b48"/></svg>
<div style="position:absolute;left:303.5px;top:1048.7px;width:755.5px;height:10.5px;background:#d0d4dd;border-radius:5.2px;"></div>
<div style="position:absolute;left:303.5px;top:1048.7px;width:739px;height:10.5px;background:#9a9fb6;border-radius:5.2px;"></div>
<div style="position:absolute;left:1098px;top:74px;width:813px;height:1005px;background:#f5f8fb;"></div>
<svg style="position:absolute;left:1132.4px;top:101.2px;" width="27.3" height="29.8" viewBox="0 0 22 24" preserveAspectRatio="none"><path d="M11 1l9.700 5.500v11L11 23 1.300 17.500v-11z M1.300 6.500L11 12l9.700-5.500 M11 12v11" fill="none" stroke="#58617c" stroke-width="1.128205128205128" stroke-linejoin="round"/></svg>
<div style="position:absolute;top:101.50px;font-size:19.2px;line-height:28px;color:#f4621a;white-space:nowrap;left:1174.30px;letter-spacing:0.272px;">[Declaring]</div>
<div style="position:absolute;top:101.50px;font-size:19.2px;line-height:28px;color:#1c2b48;white-space:nowrap;left:1273.20px;letter-spacing:-0.098px;">73541139 Battery</div>
<svg style="position:absolute;left:1847.3px;top:99.7px;" width="32" height="32" viewBox="0 0 32 32" preserveAspectRatio="none"><circle cx="16" cy="16" r="15.100" fill="none" stroke="#56607a" stroke-width="1.700"/><path d="M9.700 9.700l12.600 12.600M22.300 9.700L9.700 22.300" stroke="#56607a" stroke-width="1.900" fill="none"/></svg>
<div style="position:absolute;left:1126.7px;top:140px;width:756.3px;height:1px;background:#d3d8e2;"></div>
<div style="position:absolute;left:1127px;top:161.2px;width:92.1px;height:37.6px;background:#3f4a67;border-radius:6.5px;"></div>
<svg style="position:absolute;left:1138.8px;top:173.2px;" width="16.3" height="15" viewBox="0 0 16.300 15" preserveAspectRatio="none"><path d="M7.700 1.700L1.900 7.500l5.800 5.800M2.500 7.500h12.400" fill="none" stroke="#fff" stroke-width="3" stroke-linecap="round" stroke-linejoin="miter"/></svg>
<div style="position:absolute;top:167.50px;font-size:17px;line-height:24px;color:#fff;white-space:nowrap;left:1165.60px;letter-spacing:-0.498px;-webkit-text-stroke:0.55px #fff;">Back</div>
<div style="position:absolute;top:168.50px;font-size:16.9px;line-height:24px;color:#3f4a67;white-space:nowrap;left:1229.70px;font-weight:700;letter-spacing:-0.013px;">Material Declaration 2/3</div>
<div style="position:absolute;left:1782px;top:161.2px;width:90px;height:37.8px;border-radius:7px;border:1px solid #7d75f7;background:radial-gradient(ellipse 58% 80% at 50% 50%, #c9c6fc 0%, #aca7fa 55%, #908af8 100%);"></div>
<svg style="position:absolute;left:1793.8px;top:173.2px;" width="16.3" height="15" viewBox="0 0 16.300 15" preserveAspectRatio="none"><path d="M8.600 1.700l5.800 5.800-5.800 5.800M13.800 7.500H1.400" fill="none" stroke="#fff" stroke-width="3" stroke-linecap="round" stroke-linejoin="miter"/></svg>
<div style="position:absolute;top:167.50px;font-size:17px;line-height:24px;color:#fff;white-space:nowrap;left:1820.50px;letter-spacing:-0.244px;-webkit-text-stroke:0.55px #fff;">Next</div>
<div style="position:absolute;left:1127px;top:221.9px;width:756px;height:43.8px;background:#dff3f0;border-radius:8px;box-shadow:0 1px 6px rgba(60,80,110,0.13);"></div>
<svg style="position:absolute;left:1145px;top:235px;" width="13" height="16.5" viewBox="0 0 13 16.500" preserveAspectRatio="none"><path d="M4.200 11.600c0-1.700-2.900-3-2.900-6.100a5.200 5.200 0 0 1 10.400 0c0 3.100-2.900 4.400-2.900 6.100z" fill="none" stroke="#1c2b48" stroke-width="1.200"/><path d="M4.300 13.500h4.400M4.900 15.300h3.200" stroke="#1c2b48" stroke-width="1.500" fill="none"/><path d="M4 5.400a2.600 2.600 0 0 1 2.300-2.300" stroke="#1c2b48" stroke-width=".800" fill="none"/></svg>
<div style="position:absolute;top:231.00px;font-size:16.5px;line-height:24px;color:#1c2b48;white-space:nowrap;left:1176.30px;letter-spacing:-0.356px;">Select declaration type. Add materials and/or substances. Fill concentrations.</div>
<svg style="position:absolute;left:1836px;top:235.5px;" width="26" height="20" viewBox="0 0 26 20" preserveAspectRatio="none"><path d="M2 10.100C4.200 5.800 8.300 3.200 12.800 3.200s8.600 2.600 10.800 6.900c-2.200 4.300-6.300 6.900-10.800 6.900S4.200 14.400 2 10.100z" fill="none" stroke="#3a4562" stroke-width="1.750"/><circle cx="12.800" cy="10.100" r="3.300" fill="none" stroke="#3a4562" stroke-width="1.600"/><path d="M1 1l24 18.200" stroke="#dff3f0" stroke-width="4.600"/><path d="M1 1l24 18.200" stroke="#3a4562" stroke-width="1.750"/></svg>
<div style="position:absolute;top:289.50px;font-size:16.9px;line-height:24px;color:#0f1d3a;white-space:nowrap;left:1127.00px;font-weight:700;letter-spacing:-0.205px;">Abstract Declaration</div>
<svg style="position:absolute;left:1843px;top:292.6px;" width="16.8" height="19.8" viewBox="0 0 16 21" preserveAspectRatio="none"><path d="M1.900 5.200h12.200v13a1.800 1.800 0 0 1-1.800 1.800H3.700a1.800 1.800 0 0 1-1.800-1.800z" fill="none" stroke="#1c2b48" stroke-width="1.800"/><path d="M.300 5.200h15.400M5.200 4.800V2.300a1 1 0 0 1 1-1h3.600a1 1 0 0 1 1 1v2.500" fill="none" stroke="#1c2b48" stroke-width="1.800"/><path d="M6 8.500v8M10 8.500v8" stroke="#1c2b48" stroke-width="1.800"/></svg>
<div style="position:absolute;left:1098px;top:270px;width:800px;height:789px;overflow:hidden;"><div style="position:absolute;left:-1098px;top:-270px;">
<div style="position:absolute;left:1127px;top:332.0px;width:744.5px;height:174.5px;background:#fff;border-radius:11px;box-shadow:0 1px 8px rgba(70,90,120,0.10);"></div>
<div style="position:absolute;top:362.50px;font-size:16.9px;line-height:24px;color:#0f1d3a;white-space:nowrap;left:1155.00px;font-weight:700;letter-spacing:-0.299px;">Persistent Organic Pollutants (EU) 2019/1021 (POPs) 2019-01</div>
<svg style="position:absolute;left:1635.2px;top:360.1px;" width="24.4" height="24.4" viewBox="0 0 24.400 24.400" preserveAspectRatio="none"><circle cx="12.200" cy="12.200" r="11.400" fill="none" stroke="#2a3654" stroke-width="1.500"/></svg>
<div style="position:absolute;top:362.50px;font-size:15px;line-height:20px;color:#2a3654;white-space:nowrap;left:1635.20px;font-weight:700;width:24.4px;text-align:center;">?</div>
<svg style="position:absolute;left:1818px;top:370.7px;" width="14.2" height="9.5" viewBox="0 0 14.200 9.500" preserveAspectRatio="none"><path d="M.800 8.600L7.100 2.200l6.300 6.400" fill="none" stroke="#2a3654" stroke-width="2.200"/></svg>
<div style="position:absolute;left:1155px;top:395px;width:687px;height:1px;background:#d3d8e2;"></div>
<svg style="position:absolute;left:1157.6px;top:407.7px;" width="17.6" height="17.6" viewBox="0 0 17.600 17.600" preserveAspectRatio="none"><circle cx="8.800" cy="8.800" r="8.100" fill="none" stroke="#3f4a67" stroke-width="1.250"/></svg>
<div style="position:absolute;top:405.50px;font-size:15.9px;line-height:24px;color:#4a546c;white-space:nowrap;left:1182.50px;letter-spacing:-0.056px;">Product(s) is obsolete, no information is available</div>
<svg style="position:absolute;left:1157.6px;top:446.0px;" width="18.5" height="17.6" viewBox="0 0 18.500 17.600" preserveAspectRatio="none"><path d="M16.700 7.200A8.100 8.100 0 1 1 12.400 1.700" fill="none" stroke="#3f4a67" stroke-width="1.250" stroke-linecap="round"/><path d="M5.400 8.300l3.300 3.400L17.300 2.600" fill="none" stroke="#3f4a67" stroke-width="1.300" stroke-linecap="round" stroke-linejoin="round"/></svg>
<div style="position:absolute;top:443.50px;font-size:15.9px;line-height:24px;color:#3a4562;white-space:nowrap;left:1182.50px;font-weight:700;letter-spacing:-0.206px;">Product(s) is unknown, no information is available</div>
<div style="position:absolute;left:1127px;top:526.4px;width:744.5px;height:174.5px;background:#fff;border-radius:11px;box-shadow:0 1px 8px rgba(70,90,120,0.10);"></div>
<div style="position:absolute;top:556.50px;font-size:16.9px;line-height:24px;color:#0f1d3a;white-space:nowrap;left:1155.00px;font-weight:700;letter-spacing:-0.260px;">RoHS EU 2011/65/EU 2019-07</div>
<svg style="position:absolute;left:1391.7px;top:554.5px;" width="24.4" height="24.4" viewBox="0 0 24.400 24.400" preserveAspectRatio="none"><circle cx="12.200" cy="12.200" r="11.400" fill="none" stroke="#2a3654" stroke-width="1.500"/></svg>
<div style="position:absolute;top:557.50px;font-size:15px;line-height:20px;color:#2a3654;white-space:nowrap;left:1391.70px;font-weight:700;width:24.4px;text-align:center;">?</div>
<svg style="position:absolute;left:1818px;top:565.1px;" width="14.2" height="9.5" viewBox="0 0 14.200 9.500" preserveAspectRatio="none"><path d="M.800 8.600L7.100 2.200l6.300 6.400" fill="none" stroke="#2a3654" stroke-width="2.200"/></svg>
<div style="position:absolute;left:1155px;top:589px;width:687px;height:1px;background:#d3d8e2;"></div>
<svg style="position:absolute;left:1157.6px;top:602.1px;" width="17.6" height="17.6" viewBox="0 0 17.600 17.600" preserveAspectRatio="none"><circle cx="8.800" cy="8.800" r="8.100" fill="none" stroke="#3f4a67" stroke-width="1.250"/></svg>
<div style="position:absolute;top:599.50px;font-size:15.9px;line-height:24px;color:#4a546c;white-space:nowrap;left:1182.50px;letter-spacing:-0.056px;">Product(s) is obsolete, no information is available</div>
<svg style="position:absolute;left:1157.6px;top:640.4px;" width="18.5" height="17.6" viewBox="0 0 18.500 17.600" preserveAspectRatio="none"><path d="M16.700 7.200A8.100 8.100 0 1 1 12.400 1.700" fill="none" stroke="#3f4a67" stroke-width="1.250" stroke-linecap="round"/><path d="M5.400 8.300l3.300 3.400L17.300 2.600" fill="none" stroke="#3f4a67" stroke-width="1.300" stroke-linecap="round" stroke-linejoin="round"/></svg>
<div style="position:absolute;top:637.50px;font-size:15.9px;line-height:24px;color:#3a4562;white-space:nowrap;left:1182.50px;font-weight:700;letter-spacing:-0.206px;">Product(s) is unknown, no information is available</div>
<div style="position:absolute;left:1127px;top:720.8px;width:744.5px;height:174.5px;background:#fff;border-radius:11px;box-shadow:0 1px 8px rgba(70,90,120,0.10);"></div>
<div style="position:absolute;top:751.50px;font-size:16.9px;line-height:24px;color:#0f1d3a;white-space:nowrap;left:1155.00px;font-weight:700;letter-spacing:-0.401px;">Universal PFAS restriction proposal 2023-06</div>
<svg style="position:absolute;left:1502.3999999999999px;top:748.9px;" width="24.4" height="24.4" viewBox="0 0 24.400 24.400" preserveAspectRatio="none"><circle cx="12.200" cy="12.200" r="11.400" fill="none" stroke="#2a3654" stroke-width="1.500"/></svg>
<div style="position:absolute;top:751.50px;font-size:15px;line-height:20px;color:#2a3654;white-space:nowrap;left:1502.40px;font-weight:700;width:24.4px;text-align:center;">?</div>
<svg style="position:absolute;left:1818px;top:759.5px;" width="14.2" height="9.5" viewBox="0 0 14.200 9.500" preserveAspectRatio="none"><path d="M.800 8.600L7.100 2.200l6.300 6.400" fill="none" stroke="#2a3654" stroke-width="2.200"/></svg>
<div style="position:absolute;left:1155px;top:784px;width:687px;height:1px;background:#d3d8e2;"></div>
<svg style="position:absolute;left:1157.6px;top:796.5px;" width="17.6" height="17.6" viewBox="0 0 17.600 17.600" preserveAspectRatio="none"><circle cx="8.800" cy="8.800" r="8.100" fill="none" stroke="#3f4a67" stroke-width="1.250"/></svg>
<div style="position:absolute;top:794.50px;font-size:15.9px;line-height:24px;color:#4a546c;white-space:nowrap;left:1182.50px;letter-spacing:-0.056px;">Product(s) is obsolete, no information is available</div>
<svg style="position:absolute;left:1157.6px;top:834.8px;" width="18.5" height="17.6" viewBox="0 0 18.500 17.600" preserveAspectRatio="none"><path d="M16.700 7.200A8.100 8.100 0 1 1 12.400 1.700" fill="none" stroke="#3f4a67" stroke-width="1.250" stroke-linecap="round"/><path d="M5.400 8.300l3.300 3.400L17.300 2.600" fill="none" stroke="#3f4a67" stroke-width="1.300" stroke-linecap="round" stroke-linejoin="round"/></svg>
<div style="position:absolute;top:832.50px;font-size:15.9px;line-height:24px;color:#3a4562;white-space:nowrap;left:1182.50px;font-weight:700;letter-spacing:-0.206px;">Product(s) is unknown, no information is available</div>
<div style="position:absolute;left:1127px;top:915.2px;width:744.5px;height:174.5px;background:#fff;border-radius:11px;box-shadow:0 1px 8px rgba(70,90,120,0.10);"></div>
<div style="position:absolute;top:945.50px;font-size:16.9px;line-height:24px;color:#0f1d3a;white-space:nowrap;left:1155.00px;font-weight:700;letter-spacing:-0.390px;">REACH Restriction List (Article 67 and Annex XVII) 2023-09</div>
<svg style="position:absolute;left:1616.2px;top:943.3px;" width="24.4" height="24.4" viewBox="0 0 24.400 24.400" preserveAspectRatio="none"><circle cx="12.200" cy="12.200" r="11.400" fill="none" stroke="#2a3654" stroke-width="1.500"/></svg>
<div style="position:absolute;top:945.50px;font-size:15px;line-height:20px;color:#2a3654;white-space:nowrap;left:1616.20px;font-weight:700;width:24.4px;text-align:center;">?</div>
<svg style="position:absolute;left:1818px;top:953.9px;" width="14.2" height="9.5" viewBox="0 0 14.200 9.500" preserveAspectRatio="none"><path d="M.800 8.600L7.100 2.200l6.300 6.400" fill="none" stroke="#2a3654" stroke-width="2.200"/></svg>
<div style="position:absolute;left:1155px;top:978px;width:687px;height:1px;background:#d3d8e2;"></div>
<svg style="position:absolute;left:1157.6px;top:990.9px;" width="17.6" height="17.6" viewBox="0 0 17.600 17.600" preserveAspectRatio="none"><circle cx="8.800" cy="8.800" r="8.100" fill="none" stroke="#3f4a67" stroke-width="1.250"/></svg>
<div style="position:absolute;top:988.50px;font-size:15.9px;line-height:24px;color:#4a546c;white-space:nowrap;left:1182.50px;letter-spacing:-0.056px;">Product(s) is obsolete, no information is available</div>
<svg style="position:absolute;left:1157.6px;top:1029.2px;" width="18.5" height="17.6" viewBox="0 0 18.500 17.600" preserveAspectRatio="none"><path d="M16.700 7.200A8.100 8.100 0 1 1 12.400 1.700" fill="none" stroke="#3f4a67" stroke-width="1.250" stroke-linecap="round"/><path d="M5.400 8.300l3.300 3.400L17.300 2.600" fill="none" stroke="#3f4a67" stroke-width="1.300" stroke-linecap="round" stroke-linejoin="round"/></svg>
<div style="position:absolute;top:1026.50px;font-size:15.9px;line-height:24px;color:#3a4562;white-space:nowrap;left:1182.50px;font-weight:700;letter-spacing:-0.206px;">Product(s) is unknown, no information is available</div>
</div></div>
<div style="position:absolute;left:1880.7px;top:272px;width:10.8px;height:784px;background:#d0d4dd;border-radius:5.4px;"></div>
<div style="position:absolute;left:1880.7px;top:272.5px;width:10.8px;height:500px;background:#9a9fb6;border-radius:5.4px;"></div>
<div style="position:absolute;left:1px;top:1059px;width:1920px;height:1.3px;background:#0f2a4a;"></div>
<div style="position:absolute;top:1060.50px;font-size:17px;line-height:20px;color:#1f2d3d;white-space:nowrap;left:595.20px;letter-spacing:-0.332px;">Created by Substantio GmbH |</div>
<div style="position:absolute;top:1060.50px;font-size:17px;line-height:20px;color:#0000ee;white-space:nowrap;left:824.50px;letter-spacing:-0.194px;"><span style="text-decoration:underline;text-decoration-thickness:1px;text-underline-offset:2px;">www.substantio.com</span></div>
<div style="position:absolute;top:1060.50px;font-size:17px;line-height:20px;color:#1f2d3d;white-space:nowrap;left:983.00px;letter-spacing:-0.274px;">| connect@substantio.com</div>
<div style="position:absolute;top:1060.50px;font-size:17px;line-height:20px;color:#1f2d3d;white-space:nowrap;left:1843.00px;letter-spacing:-0.403px;">v3.0.0t11</div>
</body></html>
